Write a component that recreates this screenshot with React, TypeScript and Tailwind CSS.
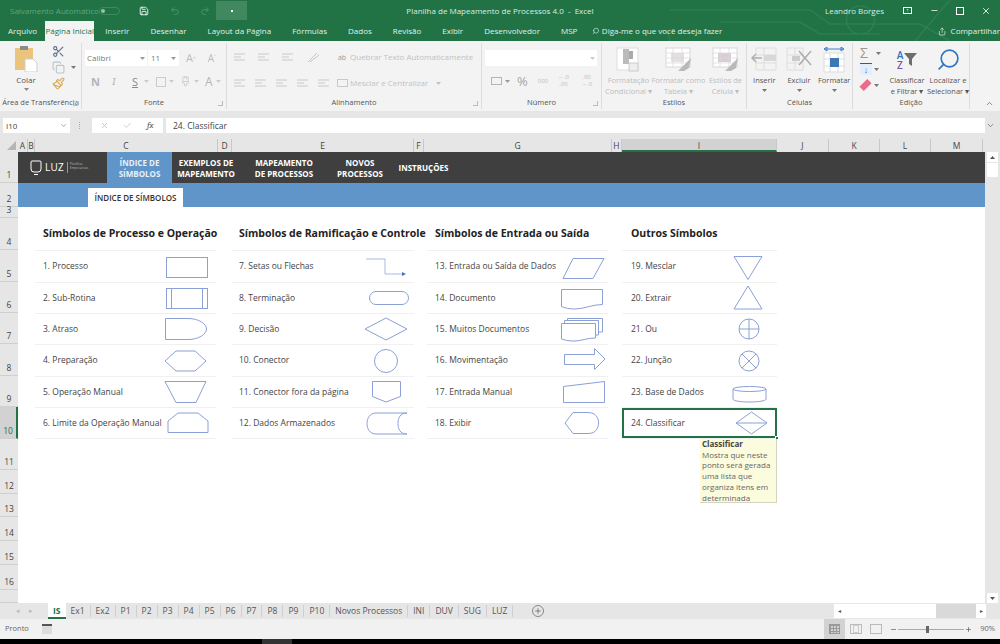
import React from 'react';
import { Save, Undo2, Redo2, Scissors, Copy, Paintbrush, Search, Share, Minus, X, Check, ChevronDown, ChevronUp, Plus, Paintbrush2 } from 'lucide-react';

const stroke = '#8ba0d6';

const Caret = ({ className = '' }: { className?: string }) => (
  <svg width="5" height="3" viewBox="0 0 5 3" className={className}>
    <path d="M0 0H5L2.5 3Z" fill="currentColor" />
  </svg>
);

const Sym = ({ children }: { children: React.ReactNode }) => (
  <svg width="46" height="28" viewBox="0 0 46 28" fill="none" stroke={stroke} strokeWidth="1" className="shrink-0">
    {children}
  </svg>
);

const sections = [
  {
    title: 'Símbolos de Processo e Operação',
    pad: 'pl-[8px]',
    box: 'mr-[6px]',
    wrap: 'pr-[2px]',
    items: [
      { label: '1. Processo', sym: <rect x="2.5" y="4.5" width="41" height="20" /> },
      { label: '2. Sub-Rotina', sym: <><rect x="2.5" y="4.5" width="41" height="20" /><path d="M7.5 4.5V24.5M38.5 4.5V24.5" /></> },
      { label: '3. Atraso', sym: <path d="M1.5 3.5H24C35 3.5 42.5 9 42.5 14C42.5 19 35 24.5 24 24.5H1.5Z" /> },
      { label: '4. Preparação', sym: <path d="M1 14L12 4H31L42 14L31 24H12Z" /> },
      { label: '5. Operação Manual', sym: <path d="M1 3.5H42L32 24.5H12Z" /> },
      { label: '6. Limite da Operação Manual', sym: <path d="M4 23.5V12L14 4H34L44 12V23.5Z" /> },
    ],
  },
  {
    title: 'Símbolos de Ramificação e Controle',
    pad: 'pl-[7px]',
    box: 'mr-[4px]',
    wrap: '',
    items: [
      { label: '7. Setas ou Flechas', sym: <><path d="M2 6H21V21H39" stroke="#a9b9e0" /><path d="M38 19L42 21L38 23Z" fill="#4472c4" stroke="none" /></> },
      { label: '8. Terminação', sym: <rect x="5.5" y="7.5" width="39" height="13" rx="6.5" /> },
      { label: '9. Decisão', sym: <path d="M1 14L22 3L43 14L22 25Z" /> },
      { label: '10. Conector', sym: <circle cx="22" cy="14" r="11.5" /> },
      { label: '11. Conector fora da página', sym: <path d="M8.5 3.5H36.5V18.5L22 24L8.5 18.5Z" /> },
      { label: '12. Dados Armazenados', sym: <path d="M43 4H12C6 4 3 9 3 14.5C3 20 6 25 12 25H43M43 4C36 4 34 9 34 14.5C34 20 36 25 43 25" /> },
    ],
  },
  {
    title: 'Símbolos de Entrada ou Saída',
    pad: 'pl-[8px]',
    box: 'mr-[2px]',
    wrap: 'ml-[3px] mr-[4px]',
    items: [
      { label: '13. Entrada ou Saída de Dados', sym: <path d="M3 25.5L13 5.5H44L33 25.5Z" /> },
      { label: '14. Documento', sym: <path d="M1.5 5.5H42.5V20.5C32 20.5 24 25 15 25C9 25 5 24 1.5 22.5Z" /> },
      { label: '15. Muitos Documentos', sym: <path d="M1.5 8.5H35.5V23C27 23 21 26 14 26C8 26 5 25 1.5 24ZM4.5 8.5V5.5H38.5V20H35.5M7.5 5.5V3.5H42.5V17H38.5" /> },
      { label: '16. Movimentação', sym: <path d="M4.5 7.5H34.5V1.5L45 12L34.5 22.5V17.5H4.5Z" /> },
      { label: '17. Entrada Manual', sym: <path d="M3.5 8.5L44.5 3.5V24.5H3.5Z" /> },
      { label: '18. Exibir', sym: <path d="M5 14L13 3.5H28C36 3.5 38.5 9 38.5 14C38.5 19 36 24.5 28 24.5H13Z" /> },
    ],
  },
  {
    title: 'Outros Símbolos',
    pad: 'pl-[9px]',
    box: 'mr-[4px]',
    wrap: '',
    items: [
      { label: '19. Mesclar', sym: <path d="M7 3.5H35L21 26.5Z" /> },
      { label: '20. Extrair', sym: <path d="M21 2L35 25H7Z" /> },
      { label: '21. Ou', sym: <><circle cx="22" cy="14" r="10" /><path d="M12 14H32M22 4V24" /></> },
      { label: '22. Junção', sym: <><circle cx="22" cy="14" r="10" /><path d="M15 7L29 21M29 7L15 21" /></> },
      { label: '23. Base de Dados', sym: <><ellipse cx="22.5" cy="11" rx="16.5" ry="2.5" /><path d="M6 11V21C6 23 14 24 22.5 24C31 24 39 23 39 21V11" /></> },
      { label: '24. Classificar', sym: <path d="M9 14L24.5 3L40 14L24.5 25ZM9 14H40" /> },
    ],
  },
];

const rowHeights = ['h-[32px]', 'h-[31px]', 'h-[31px]', 'h-[32px]', 'h-[31px]', 'h-[32px]'];

const headerRows = [
  { n: '1', h: 'h-[31px]' },
  { n: '2', h: 'h-[24px]' },
  { n: '3', h: 'h-[11px]' },
  { n: '4', h: 'h-[32px]' },
  { n: '5', h: 'h-[32px]' },
  { n: '6', h: 'h-[31px]' },
  { n: '7', h: 'h-[31px]' },
  { n: '8', h: 'h-[32px]' },
  { n: '9', h: 'h-[31px]' },
  { n: '10', h: 'h-[32px]' },
  { n: '11', h: 'h-[31px]' },
  { n: '12', h: 'h-[24px]' },
  { n: '13', h: 'h-[23px]' },
  { n: '14', h: 'h-[24px]' },
  { n: '15', h: 'h-[24px]' },
  { n: '16', h: 'h-[25px]' },
  { n: '', h: 'flex-1' },
];

const columns: [string, string][] = [
  ['A', 'w-[10px]'], ['B', 'w-[7px]'], ['C', 'w-[183px]'], ['D', 'w-[14px]'], ['E', 'w-[182px]'], ['F', 'w-[10px]'],
  ['G', 'w-[188px]'], ['H', 'w-[10px]'], ['I', 'w-[155px]'], ['J', 'w-[52px]'], ['K', 'w-[51px]'], ['L', 'w-[51px]'], ['M', 'w-[52px]'],
];

const menus = ['Inserir', 'Desenhar', 'Layout da Página', 'Fórmulas', 'Dados', 'Revisão', 'Exibir', 'Desenvolvedor', 'MSP'];
const sheets = ['Ex1', 'Ex2', 'P1', 'P2', 'P3', 'P4', 'P5', 'P6', 'P7', 'P8', 'P9', 'P10', 'Novos Processos', 'INI', 'DUV', 'SUG', 'LUZ'];

const Group = ({ w, label, children, launcher = false }: { w: string; label: string; children: React.ReactNode; launcher?: boolean }) => (
  <div className={`${w} relative flex flex-col border-r border-[#dcdcdc] h-[66px] mt-[2px]`}>
    <div className="flex-1 min-h-0">{children}</div>
    <div className="h-[13px] text-center text-[7.5px] leading-[13px] text-[#555]">{label}</div>
    {launcher && <span className="absolute right-[3px] bottom-[3px] w-[5px] h-[5px] border-r border-b border-[#bbb]" />}
  </div>
);

const GridIcon = ({ fill = '#e6dfe4', accent = false }: { fill?: string; accent?: boolean }) => (
  <svg width="28" height="25" viewBox="0 0 28 25" fill="none">
    <rect x="2" y="1" width="24" height="19" fill="#fff" stroke="#d8d8d8" />
    <rect x="7" y="6" width="13" height="9" fill={fill} />
    <path d="M2 6H26M2 11H26M2 16H26M9 1V20M18 1V20" stroke="#d8d8d8" strokeWidth="0.7" />
    {accent && <path d="M14 24L27 11L25 21L20 24Z" fill="#b9b9b9" />}
  </svg>
);

const AlignIcon = ({ x = 0 }: { x?: number }) => (
  <svg width="12" height="9" viewBox="0 0 12 9" stroke="#c9c9c9" strokeWidth="1.2">
    <path d={`M${x} 1H${x + 11}M${x} 4H${x + 7}M${x} 7H${x + 11}`} />
  </svg>
);

const BigButton = ({ w, lines, caret, icon, color = '#555' }: { w: string; lines: string[]; caret?: boolean; icon: React.ReactNode; color?: string }) => (
  <div className={`${w} flex flex-col items-center pt-[3px] text-[7.5px] leading-[11px]`} style={{ color }}>
    <div className="h-[27px] flex items-center justify-center">{icon}</div>
    <div className="whitespace-nowrap mt-[2px]">{lines[0]}</div>
    {lines[1] ? <div className="whitespace-nowrap">{lines[1]}</div> : null}
    {caret && <Caret className="mt-[3px] text-[#777]" />}
  </div>
);

function TitleBar() {
  return (
    <div className="relative h-[21px] flex items-center text-[8px] text-white">
      <span className="ml-[10px] w-[86px] whitespace-nowrap text-[#5fa57f]">Salvamento Automático</span>
      <span className="ml-[3px] w-[21px] h-[8px] rounded-full border border-[#3c8a60] flex items-center pl-[1px]">
        <span className="w-[4px] h-[4px] rounded-full bg-[#8fc3a6]" />
      </span>
      <Save size={10} className="ml-[19px]" />
      <Undo2 size={10} className="ml-[21px] text-[#4e9a72]" />
      <Redo2 size={10} className="ml-[20px] text-[#4e9a72]" />
      <span className="ml-[6px] w-[31px] h-[19px] bg-[#41875f] flex items-center justify-center">
        <span className="w-[2px] h-[2px] bg-white" />
      </span>
      <span className="ml-[158px] w-[190px] whitespace-nowrap text-center text-[#dcebe3]">Planilha de Mapeamento de Processos 4.0 &nbsp;-&nbsp; Excel</span>
      <span className="ml-[230px] whitespace-nowrap text-[#dcebe3]">Leandro Borges</span>
      <span className="ml-[19px] w-[9px] h-[7px] border border-white flex items-center justify-center text-[5px] leading-none">↑</span>
      <Minus size={9} className="ml-[18px]" />
      <span className="ml-[17px] w-[8px] h-[8px] border border-white" />
      <X size={10} className="ml-[17px]" />
    </div>
  );
}

function MenuBar() {
  return (
    <div className="relative h-[20px] flex items-center text-[8px] text-[#e3efe8]">
      <span className="ml-[8px]">Arquivo</span>
      <span className="ml-[8px] w-[66px] h-[20px] bg-[#f3f3f3] text-[#217346] text-center leading-[20px]">Página Inicial</span>
      <div className="ml-[11px] flex gap-[21px] whitespace-nowrap">
        {menus.map(m => <span key={m}>{m}</span>)}
      </div>
      <Search size={10} className="ml-[15px] -scale-x-100" />
      <span className="ml-[2px] whitespace-nowrap">Diga-me o que você deseja fazer</span>
      <Share size={11} className="ml-[216px]" />
      <span className="ml-[4px] whitespace-nowrap">Compartilhar</span>
    </div>
  );
}

function Ribbon() {
  return (
    <div className="relative h-[70px] bg-[#f3f3f3] flex text-[#555]">
      <Group w="w-[82px]" label="Área de Transferência" launcher>
        <div className="flex">
          <div className="w-[52px] flex flex-col items-center pt-[3px] text-[8px] leading-[11px]">
            <svg width="24" height="26" viewBox="0 0 24 26">
              <rect x="1" y="2" width="18" height="22" fill="#eac37d" />
              <rect x="6" y="0" width="8" height="4" fill="#8b8b8b" />
              <path d="M11 13H19L23 17V26H11Z" fill="#fff" stroke="#cfcfcf" />
            </svg>
            <span className="mt-[2px]">Colar</span>
            <Caret className="mt-[3px] text-[#888]" />
          </div>
          <div className="flex flex-col items-start gap-[3px] pt-[2px]">
            <Scissors size={13} className="text-[#5b6d8a]" />
            <div className="flex items-center gap-[6px]">
              <Copy size={13} className="text-[#b9c3cf]" />
              <Caret className="text-[#777]" />
            </div>
            <Paintbrush size={13} className="text-[#d9a94f]" />
          </div>
        </div>
      </Group>

      <Group w="w-[145px]" label="Fonte" launcher>
        <div className="flex items-center pt-[7px] pl-[3px] text-[8px]">
          <div className="w-[62px] h-[16px] bg-white flex items-center justify-between px-[2px] text-[#777]">Calibri<Caret className="text-[#999]" /></div>
          <div className="ml-[1px] w-[31px] h-[16px] bg-white flex items-center justify-between px-[3px] text-[#777]">11<Caret className="text-[#999]" /></div>
          <span className="ml-[7px] text-[11px] text-[#bdbdbd]">A<sup className="text-[5px]">^</sup></span>
          <span className="ml-[12px] text-[10px] text-[#bdbdbd]">A<sup className="text-[5px]">ˇ</sup></span>
        </div>
        <div className="flex items-center pl-[9px] pt-[8px] text-[#b5b5b5] text-[11px] leading-[14px]">
          <span className="w-[21px] font-bold">N</span>
          <span className="w-[20px] italic font-serif">I</span>
          <span className="w-[12px] underline text-[#8a8a8a]">S</span>
          <Caret className="text-[#ccc]" />
          <span className="ml-[7px] w-[10px] h-[10px] border border-[#ccc]" />
          <Caret className="ml-[3px] text-[#ccc]" />
          <Paintbrush2 size={11} className="ml-[6px] text-[#ccc]" />
          <Caret className="ml-[3px] text-[#ccc]" />
          <span className="ml-[6px] text-[12px]">A</span>
          <Caret className="ml-[3px] text-[#ccc]" />
        </div>
      </Group>

      <Group w="w-[255px]" label="Alinhamento" launcher>
        <div className="flex text-[8px] text-[#c2c2c2] whitespace-nowrap">
          <div className="w-[110px] pl-[7px] pt-[8px]">
            <div className="flex items-center gap-[12px] h-[12px]">
              <AlignIcon /><AlignIcon /><AlignIcon />
              <svg width="14" height="12" viewBox="0 0 14 12" stroke="#c4c4c4" fill="none"><path d="M2 11L11 2M4 11L13 4" /></svg>
            </div>
            <div className="flex items-center gap-[9px] h-[12px] mt-[14px]">
              <AlignIcon /><AlignIcon /><AlignIcon /><AlignIcon /><AlignIcon />
            </div>
          </div>
          <div className="pt-[8px]">
            <div className="flex items-center h-[12px] gap-[3px]">
              <span className="text-[7px] leading-[7px] text-[#9a9a9a] text-center w-[10px]">ab</span>
              <span>Quebrar Texto Automaticamente</span>
            </div>
            <div className="flex items-center h-[12px] mt-[14px] gap-[2px]">
              <span className="w-[11px] h-[8px] border border-[#c9c9c9]" />
              <span>Mesclar e Centralizar</span>
              <Caret className="ml-[6px]" />
            </div>
          </div>
        </div>
      </Group>

      <Group w="w-[120px]" label="Número" launcher>
        <div className="pt-[7px] pl-[3px]">
          <div className="w-[112px] h-[16px] bg-white flex items-center justify-end px-[2px]"><Caret className="text-[#ccc]" /></div>
          <div className="flex items-center mt-[8px] pl-[6px] text-[#bbb] text-[8px] h-[14px] whitespace-nowrap">
            <span className="w-[11px] h-[8px] border border-[#b5b5b5]" />
            <Caret className="ml-[3px] text-[#999]" />
            <span className="ml-[7px] text-[13px] leading-none text-[#a5a5a5]">%</span>
            <span className="ml-[10px] text-[6px]">000</span>
            <span className="ml-[10px] text-[6px] leading-[7px] text-center">←.0<br />,00</span>
            <span className="ml-[12px] text-[6px] leading-[7px] text-center">,00<br />→.0</span>
          </div>
        </div>
      </Group>

      <Group w="w-[145px]" label="Estilos">
        <div className="flex pl-[3px]">
          <BigButton w="w-[47px]" color="#bdbdbd" lines={['Formatação', 'Condicional ▾']} icon={
            <svg width="24" height="25" viewBox="0 0 24 25"><rect x="1" y="1" width="21" height="22" fill="#fff" stroke="#ddd" /><rect x="7" y="2" width="6" height="15" fill="#bbb" /><rect x="13" y="4" width="4" height="8" fill="#aaa" /><rect x="13" y="16" width="9" height="8" fill="#eee" stroke="#ccc" /></svg>
          } />
          <BigButton w="w-[53px]" color="#bdbdbd" lines={['Formatar como', 'Tabela ▾']} icon={<GridIcon accent />} />
          <BigButton w="w-[43px]" color="#bdbdbd" lines={['Estilos de', 'Célula ▾']} icon={<GridIcon accent fill="#d9ccd6" />} />
        </div>
      </Group>

      <Group w="w-[106px]" label="Células">
        <div className="flex">
          <BigButton w="w-[35px]" lines={['Inserir']} caret icon={
            <svg width="26" height="25" viewBox="0 0 26 25" fill="none"><path d="M5 1H25V23H5Z" stroke="#ddd" /><path d="M5 8H25M5 16H25M13 1V23" stroke="#ddd" /><rect x="13" y="8" width="12" height="6" fill="#d8d8d8" /><path d="M1 11H11M5 7L1 11L5 15" stroke="#b0b0b0" strokeWidth="1.5" /></svg>
          } />
          <BigButton w="w-[35px]" lines={['Excluir']} caret icon={
            <svg width="26" height="25" viewBox="0 0 26 25" fill="none"><path d="M1 1H17V23H1Z" stroke="#ddd" /><path d="M1 8H17M1 16H17M9 1V23" stroke="#ddd" /><rect x="6" y="9" width="8" height="5" fill="#ccc" /><path d="M13 4L25 18M25 4L13 18" stroke="#aaa" strokeWidth="1.4" /></svg>
          } />
          <BigButton w="w-[36px]" lines={['Formatar']} caret icon={
            <svg width="24" height="26" viewBox="0 0 24 26" fill="none"><path d="M2 2H22M2 2L5 0V4ZM22 2L19 0V4Z" stroke="#3e7fc4" /><path d="M2 6H22V25H2Z" fill="#fff" stroke="#ddd" /><path d="M2 12H22M2 19H22M8 6V25M16 6V25" stroke="#ddd" /><rect x="8" y="11" width="9" height="9" fill="#3b78b5" /></svg>
          } />
        </div>
      </Group>

      <Group w="w-[117px]" label="Edição">
        <div className="flex pl-[7px]">
          <div className="w-[27px] flex flex-col gap-[2px] pt-[3px]">
            <div className="flex items-center gap-[8px] h-[14px] text-[14px] leading-none text-[#999]">Σ<Caret className="text-[#777]" /></div>
            <div className="flex items-center gap-[2px] h-[14px]">
              <span className="w-[12px] h-[12px] bg-[#e4eefb] border-t border-[#555] text-[#2e75c4] text-center text-[9px] leading-[11px]">↓</span>
              <Caret className="text-[#777]" />
            </div>
            <div className="flex items-center gap-[3px] h-[14px]">
              <span className="w-[11px] h-[6px] bg-[#ea6b8a] -rotate-45" />
              <Caret className="text-[#777]" />
            </div>
          </div>
          <BigButton w="w-[40px]" lines={['Classificar', 'e Filtrar ▾']} icon={
            <div className="flex items-center">
              <div className="text-[10px] leading-[10px] text-[#2e75c4] text-center font-semibold">A<div className="text-[#7a55a8]">Z</div></div>
              <svg width="13" height="15" viewBox="0 0 13 15" className="ml-[1px]"><path d="M0 1H13L8 7V14L5 12V7Z" fill="#6d6d6d" /></svg>
            </div>
          } />
          <BigButton w="w-[42px]" lines={['Localizar e', 'Selecionar ▾']} icon={<Search size={25} strokeWidth={1.6} className="text-[#2e75c4] -scale-x-100" />} />
        </div>
      </Group>
      <ChevronUp size={9} className="ml-[15px] mt-[58px] text-[#666]" />
    </div>
  );
}

function FormulaBar() {
  return (
    <div className="bg-[#e6e6e6] pt-[7px] pb-[6px]">
      <div className="h-[15px] flex items-center text-[8px] text-[#444]">
        <div className="ml-[3px] w-[67px] h-[15px] bg-white flex items-center justify-between px-[3px]">I10<ChevronDown size={7} className="text-[#666]" /></div>
        <span className="ml-[9px] w-[2px] h-[7px] border-l border-dotted border-[#aaa]" />
        <div className="ml-[11px] w-[71px] h-[15px] bg-white flex items-center px-[8px] text-[#bbb]">
          <X size={9} />
          <Check size={9} className="ml-[14px]" />
          <span className="ml-[15px] italic font-serif text-[#555] text-[9px]">fx</span>
        </div>
        <div className="ml-[3px] w-[819px] h-[15px] bg-white pl-[7px] text-[8.5px] leading-[15px]">24. Classificar</div>
        <ChevronDown size={9} className="ml-[1px] text-[#666]" />
      </div>
    </div>
  );
}

function ColumnHeaders() {
  return (
    <div className="h-[13px] flex bg-[#e6e6e6] text-[8.5px] text-[#444] overflow-hidden">
      <div className="w-[18px] shrink-0 relative">
        <span className="absolute right-[2px] bottom-[2px] w-0 h-0 border-l-[9px] border-l-transparent border-b-[9px] border-b-[#b5b5b5]" />
      </div>
      {columns.map(([name, w]) => (
        <div key={name} className={`${w} shrink-0 text-center leading-[13px] border-r border-[#c8c8c8] ${name === 'I' ? 'bg-[#d2d2d2] border-b-2 border-b-[#217346]' : ''}`}>{name}</div>
      ))}
    </div>
  );
}

function RowHeaders() {
  return (
    <div className="w-[18px] shrink-0 flex flex-col bg-[#e6e6e6] text-[8.5px] text-[#444]">
      {headerRows.map(r => (
        <div key={r.n || 'end'} className={`${r.h} flex items-end justify-center pb-[2px] border-b border-[#cfcfcf] leading-[10px] ${r.n === '10' ? 'bg-[#d2d2d2] border-r-2 border-r-[#217346] text-[#217346]' : ''}`}>
          {r.n}
        </div>
      ))}
    </div>
  );
}

function Section({ s, w, last }: { s: (typeof sections)[number]; w: string; last?: boolean }) {
  return (
    <div className={`${w} shrink-0 ${s.wrap}`}>
      <div className={`h-[32px] ${s.pad} flex items-center text-[10.5px] font-bold text-[#222] whitespace-nowrap`}>{s.title}</div>
      {s.items.map((it, i) => {
        const selected = last && i === 5;
        return (
          <div key={it.label} className={`${rowHeights[i]} relative flex items-center text-[8.5px] text-[#444] border-t border-[#f0f0f0] ${i === 5 ? 'border-b' : ''} ${s.pad}`}>
            <span className="whitespace-nowrap">{it.label}</span>
            <span className={`ml-auto ${s.box}`}><Sym>{it.sym}</Sym></span>
            {selected && (
              <>
                <span className="absolute inset-0 border-2 border-[#217346]" />
                <span className="absolute right-[-2px] bottom-[-2px] w-[4px] h-[4px] bg-[#217346] border border-white" />
                <div className="absolute left-[78px] top-full mt-[1px] z-10 w-[77px] h-[64px] overflow-hidden bg-[#fbfbdd] border-r border-b border-[#d4d4c0] px-[2px] text-[8px] leading-[10.7px] text-[#666]">
                  <div className="font-bold text-[#444]">Classificar</div>
                  Mostra que neste<br />ponto será gerada<br />uma lista que<br />organiza itens em<br />determinada ordem
                </div>
              </>
            )}
          </div>
        );
      })}
    </div>
  );
}

function Sheet() {
  return (
    <div className="h-[451px] flex">
      <RowHeaders />
      <div className="flex-1 min-w-0 bg-white flex flex-col">
        <div className="h-[31px] bg-[#3f3f3f] flex text-white text-[8px] font-bold leading-[11px] text-center">
          <div className="w-[89px] flex items-center pl-[12px] font-normal">
            <svg width="12" height="16" viewBox="0 0 12 16" fill="none" stroke="#fff" strokeWidth="1"><path d="M2 1H10Q11 1 11 2V9Q11 12 8 12H4Q1 12 1 9V2Q1 1 2 1ZM4 14.5H8" /></svg>
            <span className="ml-[3px] text-[10px] tracking-wide">LUZ</span>
            <span className="ml-[3px] h-[11px] border-l border-[#999] pl-[2px] text-[3px] leading-[4px] text-left text-[#bbb]">Planilhas<br />Empresariais</span>
          </div>
          <div className="w-[65px] bg-[#5f95c9] flex items-center justify-center text-[#e8f0f8]">ÍNDICE DE<br />SÍMBOLOS</div>
          <div className="w-[68px] flex items-center justify-center">EXEMPLOS DE<br />MAPEAMENTO</div>
          <div className="w-[88px] flex items-center justify-center">MAPEAMENTO<br />DE PROCESSOS</div>
          <div className="w-[64px] flex items-center justify-center">NOVOS<br />PROCESSOS</div>
          <div className="w-[63px] flex items-center justify-center">INSTRUÇÕES</div>
        </div>
        <div className="h-[24px] bg-[#5f95c9] flex items-end pl-[70px]">
          <div className="w-[95px] h-[19px] bg-white text-center text-[8px] font-semibold leading-[19px] text-[#333]">ÍNDICE DE SÍMBOLOS</div>
        </div>
        <div className="h-[11px]" />
        <div className="flex pl-[17px]">
          <Section s={sections[0]} w="w-[183px]" />
          <div className="w-[14px] shrink-0" />
          <Section s={sections[1]} w="w-[182px]" />
          <div className="w-[10px] shrink-0" />
          <Section s={sections[2]} w="w-[181px]" />
          <div className="w-[10px] shrink-0" />
          <Section s={sections[3]} w="w-[155px]" last />
        </div>
      </div>
      <div className="w-[15px] shrink-0 bg-[#e6e6e6] flex flex-col items-center">
        <div className="w-[11px] h-[10px] bg-white flex items-center justify-center"><Caret className="rotate-180 text-[#555]" /></div>
        <div className="w-[11px] h-[14px] bg-white mt-[1px]" />
        <div className="flex-1" />
        <div className="w-[11px] h-[10px] bg-white flex items-center justify-center"><Caret className="text-[#555]" /></div>
      </div>
    </div>
  );
}

function SheetTabs() {
  return (
    <div className="h-[16px] bg-[#e6e6e6] flex items-center text-[8.5px] text-[#555] whitespace-nowrap">
      <span className="w-[48px] flex justify-center gap-[9px] text-[#bbb] text-[7px]"><span>◂</span><span>▸</span></span>
      <span className="px-[5px] h-[16px] bg-white font-bold text-[#217346] border-b-2 border-[#217346] leading-[15px]">IS</span>
      {sheets.map(t => (
        <span key={t} className="px-[5px] border-r border-[#cfcfcf] leading-[12px]">{t}</span>
      ))}
      <span className="ml-[19px] w-[12px] h-[12px] rounded-full border border-[#888] flex items-center justify-center"><Plus size={8} /></span>
      <div className="ml-auto flex items-center h-[14px] pr-[14px]">
        <span className="w-[10px] h-[14px] bg-white flex items-center justify-center text-[6px]">◂</span>
        <span className="w-[92px] h-[14px] bg-white" />
        <span className="w-[40px] h-[14px] bg-[#d9d9d9]" />
        <span className="w-[10px] h-[14px] bg-white flex items-center justify-center text-[6px]">▸</span>
      </div>
    </div>
  );
}

function StatusBar() {
  return (
    <div className="h-[20px] bg-[#f1f1f1] flex items-center text-[7.5px] text-[#666]">
      <span className="ml-[5px]">Pronto</span>
      <svg width="10" height="10" viewBox="0 0 10 10" className="ml-[13px]"><rect width="10" height="10" fill="#ddd" /><rect width="10" height="2" fill="#555" /></svg>
      <div className="ml-auto h-[20px] flex items-center">
        <span className="w-[21px] h-[20px] bg-[#d2d2d2] flex items-center justify-center">
          <span className="w-[11px] h-[10px] border border-[#999] bg-[linear-gradient(#999_1px,transparent_1px),linear-gradient(90deg,#999_1px,transparent_1px)] bg-[length:3px_3px]" />
        </span>
        <span className="ml-[5px] w-[12px] h-[10px] border border-[#bbb] flex justify-center"><span className="w-[6px] h-[8px] border border-[#ccc]" /></span>
        <span className="ml-[8px] w-[12px] h-[10px] border border-[#bbb]" />
        <Minus size={7} className="ml-[8px] text-[#444]" />
        <span className="relative ml-[1px] w-[66px] h-[1px] bg-[#aaa]">
          <span className="absolute left-[28px] top-[-3px] w-[3px] h-[7px] bg-[#666]" />
        </span>
        <Plus size={7} className="ml-[1px] text-[#444]" />
        <span className="ml-[8px] mr-[5px]">90%</span>
      </div>
    </div>
  );
}

export default function App() {
  return (
    <div className="w-[1000px] h-[644px] flex flex-col overflow-hidden bg-white font-['Open_Sans','Noto_Sans',sans-serif]">
      <div className="relative bg-[#217346]">
        <svg className="absolute right-0 top-0" width="340" height="41" viewBox="0 0 340 41" fill="none" stroke="#2d7f53" strokeWidth="1.5">
          <path d="M10 10H150L170 24H260L290 41M60 22H140L160 34H220M290 0L255 41M200 6a14 14 0 1 0 1 0M0 30a9 9 0 1 0 1 0" />
        </svg>
        <div className="relative">
          <TitleBar />
          <MenuBar />
        </div>
      </div>
      <Ribbon />
      <FormulaBar />
      <ColumnHeaders />
      <Sheet />
      <SheetTabs />
      <StatusBar />
      <div className="h-[5px] bg-black flex">
        <span className="ml-[262px] w-[30px] h-[5px] bg-[#333]" />
      </div>
    </div>
  );
}
